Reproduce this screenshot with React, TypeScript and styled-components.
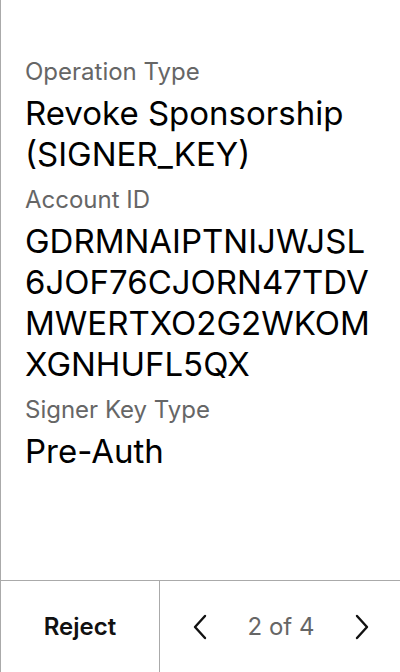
import * as React from "react";
import styled, { createGlobalStyle } from "styled-components";

const GlobalStyle = createGlobalStyle`
  html, body {
    margin: 0;
    padding: 0;
    background: #fff;
  }
  body {
    font-family: Inter, "Noto Sans", sans-serif;
    -webkit-font-smoothing: antialiased;
  }
`;

const fields = [
  { label: "Operation Type", value: "Revoke Sponsorship (SIGNER_KEY)" },
  {
    label: "Account ID",
    value: "GDRMNAIPTNIJWJSL6JOF76CJORN47TDVMWERTXO2G2WKOMXGNHUFL5QX",
    mono: true,
  },
  { label: "Signer Key Type", value: "Pre-Auth" },
];

const Chevron = ({ dir }: { dir: "left" | "right" }) => (
  <svg width="16" height="26" viewBox="0 0 16 26" fill="none">
    <path
      d={dir === "left" ? "M13 2 L3 13 L13 24" : "M3 2 L13 13 L3 24"}
      stroke="#111"
      strokeWidth="2.4"
      strokeLinecap="round"
      strokeLinejoin="round"
    />
  </svg>
);

const App = () => {
  return (
    <>
      <GlobalStyle />
      <Screen>
        <Content>
          {fields.map((f) => (
            <Field key={f.label}>
              <Label>{f.label}</Label>
              <Value breakAll={!!f.mono}>{f.value}</Value>
            </Field>
          ))}
        </Content>
        <Footer>
          <RejectButton type="button">Reject</RejectButton>
          <Pager>
            <NavButton type="button" aria-label="Previous">
              <Chevron dir="left" />
            </NavButton>
            <PageCount>2 of 4</PageCount>
            <NavButton type="button" aria-label="Next">
              <Chevron dir="right" />
            </NavButton>
          </Pager>
        </Footer>
      </Screen>
    </>
  );
};

const Screen = styled.div`
  display: flex;
  flex-direction: column;
  height: 672px;
  width: 400px;
  box-sizing: border-box;
  border-left: 1px solid #aaa;
`;

const Content = styled.div`
  flex: 1;
  display: flex;
  flex-direction: column;
  gap: 10px;
  padding: 57px 24px 0 24px;
`;

const Field = styled.div`
  display: flex;
  flex-direction: column;
  gap: 6px;
`;

const Label = styled.div`
  font-size: 24px;
  line-height: 30px;
  color: #666;
`;

const Value = styled.div<{ breakAll?: boolean }>`
  font-size: 33px;
  line-height: 41px;
  color: #000;
  word-break: ${(p) => (p.breakAll ? "break-all" : "normal")};
`;

const Footer = styled.div`
  display: flex;
  height: 91px;
  border-top: 1px solid #aaa;
`;

const RejectButton = styled.button`
  width: 159px;
  border: none;
  border-right: 1px solid #aaa;
  background: none;
  font-family: Inter, "Noto Sans", sans-serif;
  font-size: 24px;
  font-weight: 600;
  color: #111;
  padding: 0;
`;

const Pager = styled.div`
  flex: 1;
  display: flex;
  align-items: center;
  justify-content: space-between;
  padding: 0 30px 0 32px;
`;

const NavButton = styled.button`
  border: none;
  background: none;
  padding: 0;
  display: flex;
  align-items: center;
`;

const PageCount = styled.span`
  font-size: 24px;
  color: #666;
`;

export default App;
